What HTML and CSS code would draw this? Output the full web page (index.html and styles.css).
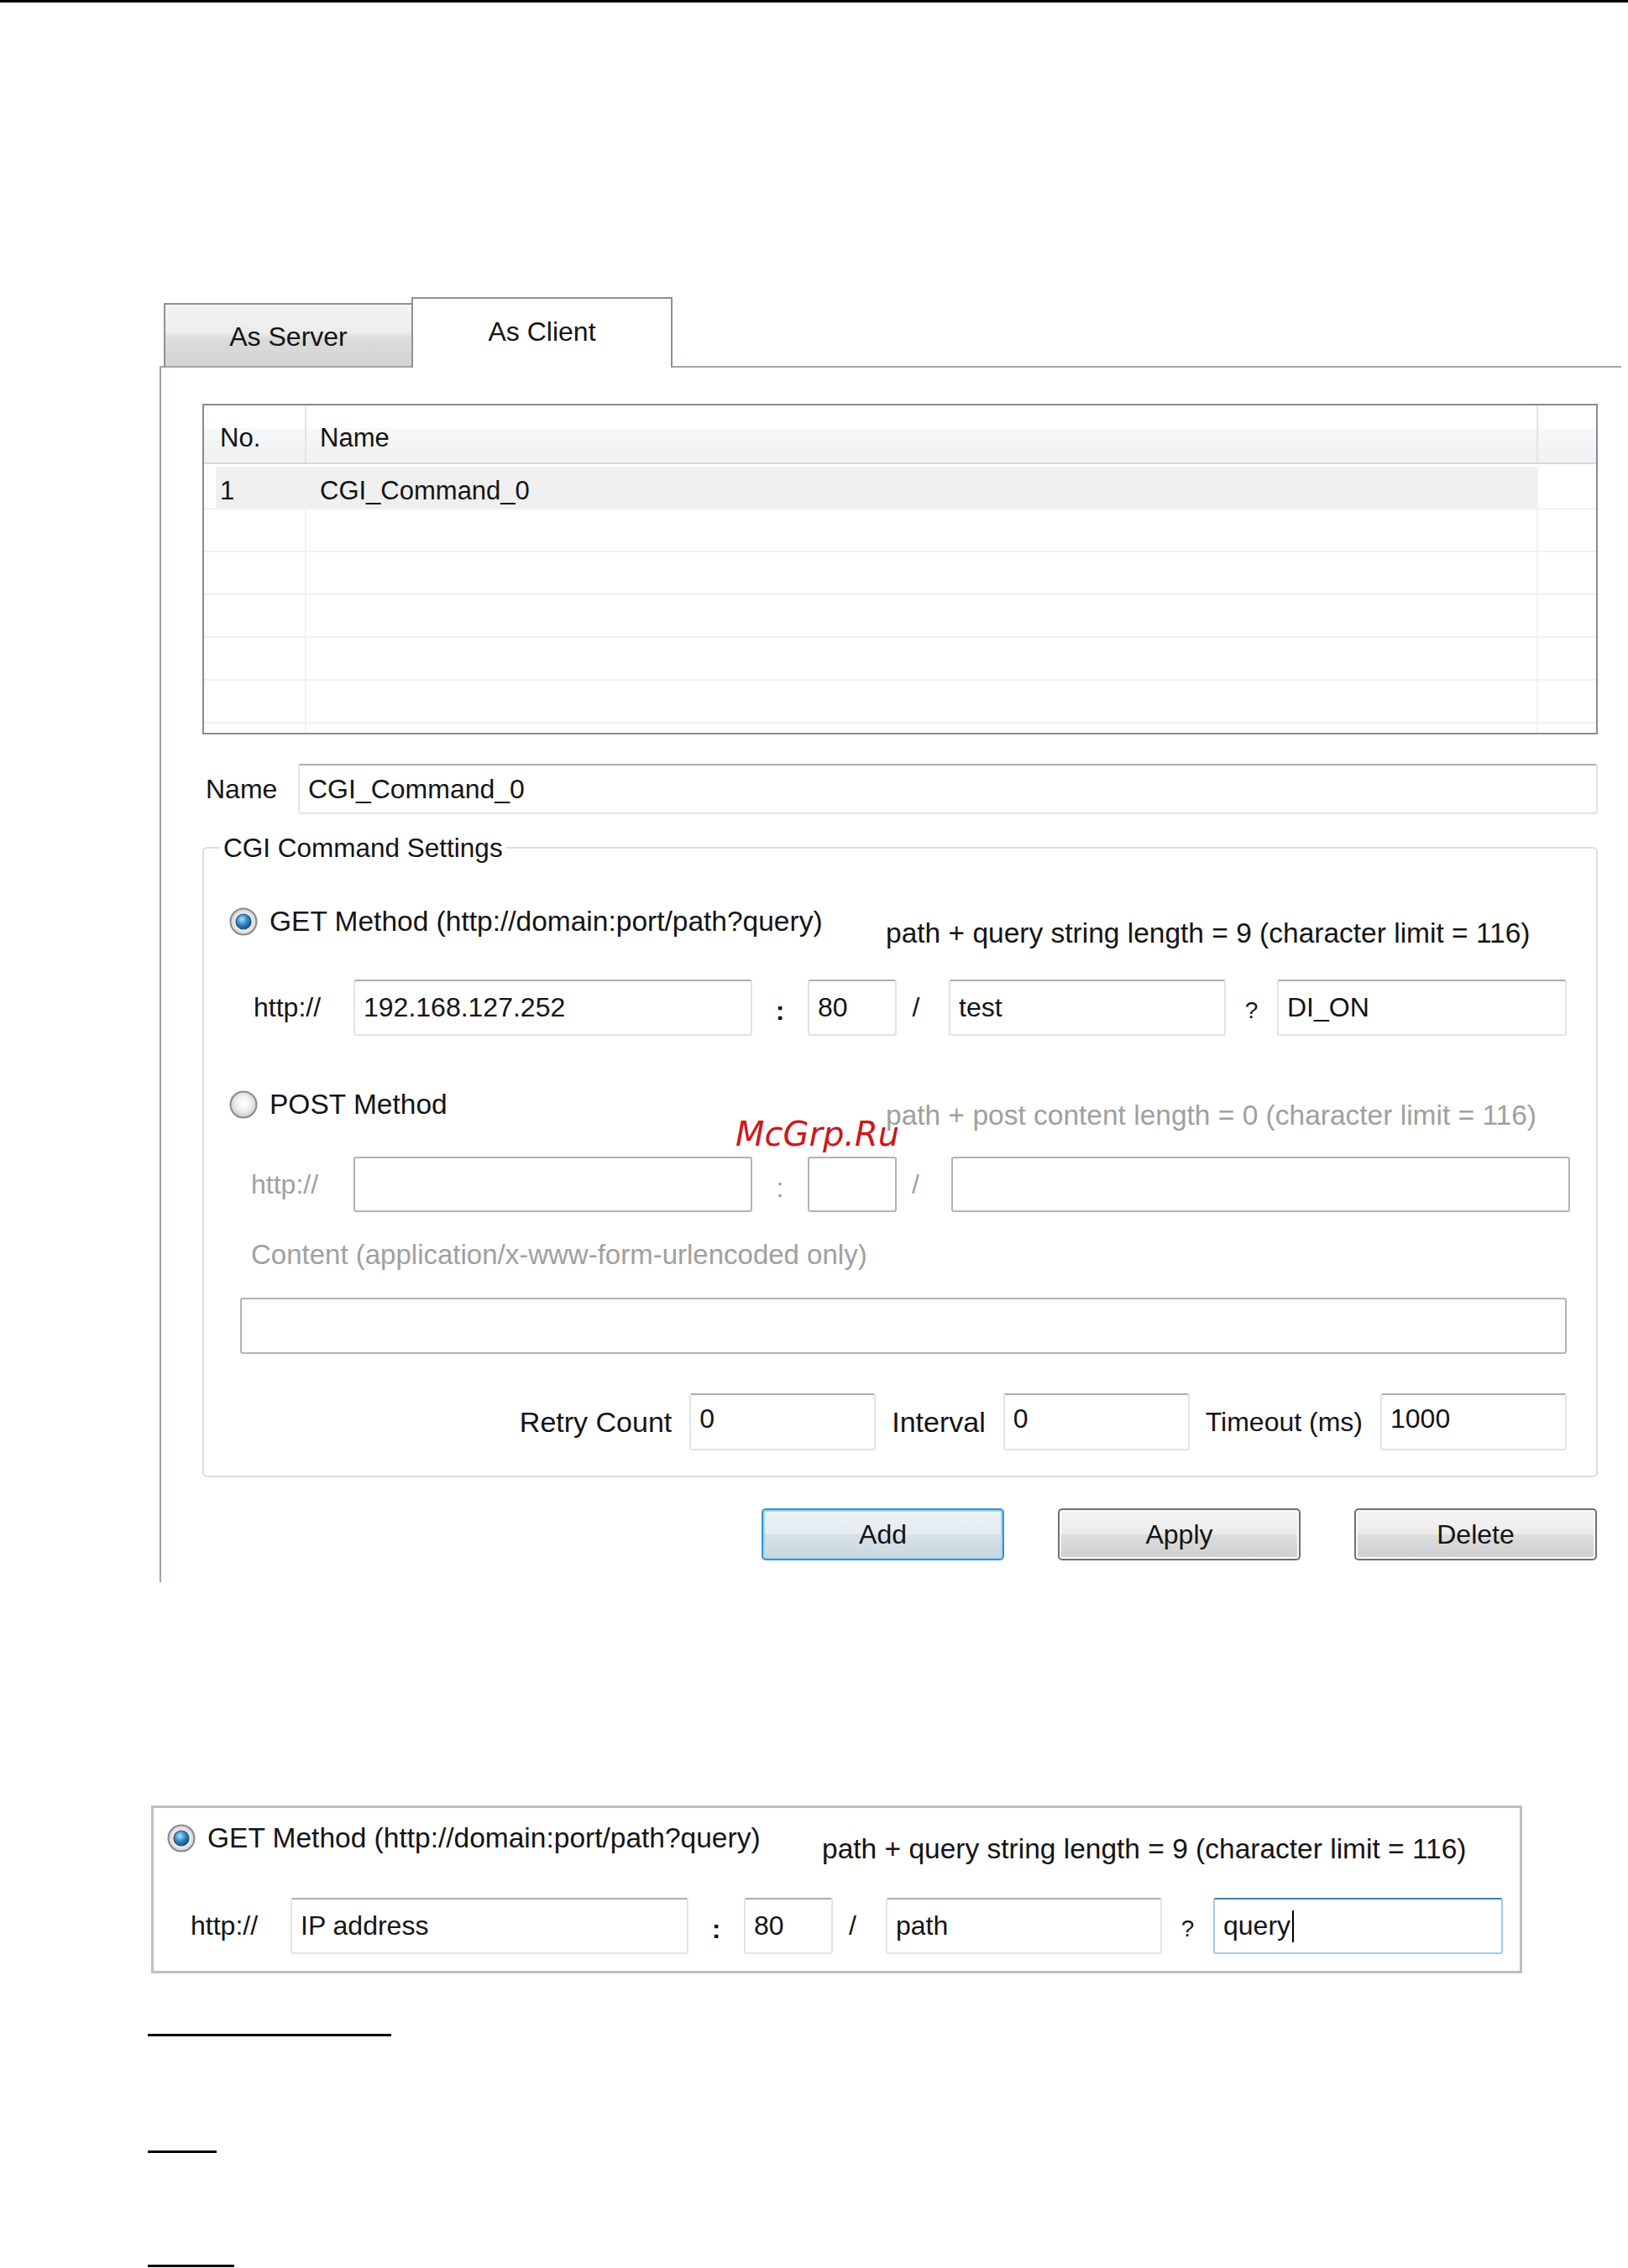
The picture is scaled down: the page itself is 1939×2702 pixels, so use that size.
FILE: index.html
```html
<!DOCTYPE html>
<html lang="en">
<head>
    <meta charset="UTF-8">
    <meta name="viewport" content="width=device-width, initial-scale=1.0">
    <title>CGI Command - As Client</title>
    <link rel="stylesheet" href="styles.css">
</head>
<body>
    <div class="page-rule"></div>

    <div class="tabs">
        <div class="tab-gap"></div>
        <div class="tab tab-server">As Server</div>
        <div class="tab tab-client">As Client</div>
        <div class="tab-fill"></div>
    </div>

    <div class="client-panel">
        <div class="list">
            <div class="list-head">
                <div class="cell cell-no">No.</div>
                <div class="cell cell-name">Name</div>
                <div class="cell cell-end"></div>
            </div>
            <div class="list-row is-selected">
                <div class="cell cell-no">1</div>
                <div class="cell cell-name">CGI_Command_0</div>
                <div class="cell cell-end"></div>
            </div>
            <div class="list-row"><div class="cell"></div><div class="cell"></div><div class="cell cell-end"></div></div>
            <div class="list-row"><div class="cell"></div><div class="cell"></div><div class="cell cell-end"></div></div>
            <div class="list-row"><div class="cell"></div><div class="cell"></div><div class="cell cell-end"></div></div>
            <div class="list-row"><div class="cell"></div><div class="cell"></div><div class="cell cell-end"></div></div>
            <div class="list-row"><div class="cell"></div><div class="cell"></div><div class="cell cell-end"></div></div>
            <div class="list-row"><div class="cell"></div><div class="cell"></div><div class="cell cell-end"></div></div>
        </div>

        <div class="name-row">
            <label class="name-label" for="cmdName">Name</label>
            <input class="field name-field" id="cmdName" type="text" value="CGI_Command_0">
        </div>

        <fieldset class="settings">
            <legend>CGI Command Settings</legend>
            <div class="settings-body">
                <div class="method">
                    <label class="option">
                        <svg class="radio" width="34" height="34" viewBox="0 0 34 34">
                            <defs>
                                <radialGradient id="ringOn" cx="50%" cy="50%" r="50%">
                                    <stop offset="0.5" stop-color="#fbfbfb"/>
                                    <stop offset="1" stop-color="#cfcfcf"/>
                                </radialGradient>
                                <radialGradient id="dotOn" cx="40%" cy="35%" r="70%">
                                    <stop offset="0" stop-color="#b0e4fc"/>
                                    <stop offset="0.45" stop-color="#3b93d1"/>
                                    <stop offset="1" stop-color="#15456e"/>
                                </radialGradient>
                            </defs>
                            <circle cx="17" cy="17" r="15.5" fill="url(#ringOn)" stroke="#8a8a8a" stroke-width="2"/>
                            <circle cx="17" cy="17" r="9" fill="url(#dotOn)" stroke="#1d4e78" stroke-width="1.2"/>
                        </svg>
                        <span>GET Method (http://domain:port/path?query)</span>
                    </label>
                    <span class="hint hint-get">path + query string length = 9 (character limit = 116)</span>
                </div>

                <div class="url-row url-get">
                    <span class="scheme">http://</span>
                    <input class="field host" type="text" value="192.168.127.252">
                    <span class="sep sep-colon">:</span>
                    <input class="field port" type="text" value="80">
                    <span class="sep sep-slash">/</span>
                    <input class="field path" type="text" value="test">
                    <span class="sep sep-query">?</span>
                    <input class="field query" type="text" value="DI_ON">
                </div>

                <div class="method method-post">
                    <label class="option">
                        <svg class="radio" width="34" height="34" viewBox="0 0 34 34">
                            <defs>
                                <radialGradient id="ringOff" cx="50%" cy="45%" r="55%">
                                    <stop offset="0" stop-color="#ffffff"/>
                                    <stop offset="0.55" stop-color="#eeeeee"/>
                                    <stop offset="1" stop-color="#c4c4c4"/>
                                </radialGradient>
                            </defs>
                            <circle cx="17" cy="17" r="15.5" fill="url(#ringOff)" stroke="#8a8a8a" stroke-width="2"/>
                        </svg>
                        <span>POST Method</span>
                    </label>
                    <span class="hint hint-post">path + post content length = 0 (character limit = 116)</span>
                </div>

                <div class="url-row url-post">
                    <span class="scheme">http://</span>
                    <input class="field host" type="text" disabled>
                    <span class="sep sep-colon">:</span>
                    <input class="field port" type="text" disabled>
                    <span class="sep sep-slash-wide">/</span>
                    <input class="field post-path" type="text" disabled>
                </div>

                <div class="content-label">Content (application/x-www-form-urlencoded only)</div>
                <input class="field content-field" type="text" disabled>

                <div class="timing">
                    <label class="timing-label">Retry Count</label>
                    <input class="field num" type="text" value="0">
                    <label class="timing-label">Interval</label>
                    <input class="field num" type="text" value="0">
                    <label class="timing-label timing-ms">Timeout (ms)</label>
                    <input class="field num" type="text" value="1000">
                </div>
            </div>
        </fieldset>

        <div class="actions">
            <button class="btn btn-default">Add</button>
            <button class="btn">Apply</button>
            <button class="btn">Delete</button>
        </div>
    </div>

    <div class="figure">
        <div class="method">
            <label class="option">
                <svg class="radio" width="34" height="34" viewBox="0 0 34 34">
                    <defs>
                        <radialGradient id="ringFig" cx="50%" cy="50%" r="50%">
                            <stop offset="0.5" stop-color="#fbfbfb"/>
                            <stop offset="1" stop-color="#cfcfcf"/>
                        </radialGradient>
                        <radialGradient id="dotFig" cx="40%" cy="35%" r="70%">
                            <stop offset="0" stop-color="#b0e4fc"/>
                            <stop offset="0.45" stop-color="#3b93d1"/>
                            <stop offset="1" stop-color="#15456e"/>
                        </radialGradient>
                    </defs>
                    <circle cx="17" cy="17" r="15.5" fill="url(#ringFig)" stroke="#8a8a8a" stroke-width="2"/>
                    <circle cx="17" cy="17" r="9" fill="url(#dotFig)" stroke="#1d4e78" stroke-width="1.2"/>
                </svg>
                <span>GET Method (http://domain:port/path?query)</span>
            </label>
            <span class="hint hint-fig">path + query string length = 9 (character limit = 116)</span>
        </div>
        <div class="url-row url-fig">
            <span class="scheme">http://</span>
            <input class="field host" type="text" value="IP address">
            <span class="sep sep-colon">:</span>
            <input class="field port" type="text" value="80">
            <span class="sep sep-slash">/</span>
            <input class="field path" type="text" value="path">
            <span class="sep sep-query">?</span>
            <div class="field query field-focus">query<span class="caret"></span></div>
        </div>
    </div>

    <div class="rule rule-a"></div>
    <div class="rule rule-b"></div>
    <div class="rule rule-c"></div>

    <div class="watermark">McGrp.Ru</div>
</body>
</html>
```

FILE: styles.css
```css
body {
    margin: 0;
    background-color: #fff;
    font-family: "Liberation Sans", Arial, sans-serif;
    font-size: 32px;
    color: #141414;
    position: relative;
}
.page-rule {
    height: 3px;
    background-color: #000;
}

/* tabs */
.tabs {
    display: flex;
    align-items: flex-end;
    width: 1741px;
    height: 84px;
    margin: 351px 0 0 190px;
}
.tab-gap {
    width: 5px;
    border-bottom: 2px solid #a2a5ac;
}
.tab-fill {
    flex: 1;
    border-bottom: 2px solid #a2a5ac;
}
.tab {
    box-sizing: border-box;
    display: flex;
    align-items: center;
    justify-content: center;
    border: 2px solid #8c9097;
}
.tab-server {
    width: 295px;
    height: 77px;
    padding-top: 4px;
    border-right: none;
    border-bottom-color: #a2a5ac;
    background: linear-gradient(#f4f4f4 0%, #ececec 45%, #dcdcdc 55%, #d3d3d3 100%);
}
.tab-client {
    width: 311px;
    height: 84px;
    padding-bottom: 4px;
    border-bottom: none;
    background-color: #fff;
}

/* panel */
.client-panel {
    box-sizing: border-box;
    width: 1741px;
    margin-left: 190px;
    border-left: 2px solid #9da1a8;
    padding: 43px 28px 26px 49px;
}

/* list view */
.list {
    box-sizing: border-box;
    height: 394px;
    border: 2px solid #868a92;
    overflow: hidden;
    font-size: 31px;
}
.list-head,
.list-row {
    display: grid;
    grid-template-columns: 122px 1fr 69px;
    box-sizing: border-box;
}
.list-head {
    height: 70px;
    border-bottom: 2px solid #d6d7d9;
    background: linear-gradient(#fff 0%, #fff 40%, #f7f8f9 42%, #eef0f2 100%);
}
.list-head .cell {
    display: flex;
    align-items: center;
    padding-top: 10px;
    border-right: 2px solid #e3e4e6;
}
.list-row {
    height: 51px;
    border-bottom: 2px solid #f1f1f1;
}
.list-row.is-selected {
    height: 54px;
    padding-top: 3px;
}
.list-row .cell {
    display: flex;
    align-items: center;
    padding-top: 4px;
    border-right: 2px solid #f2f2f2;
}
.list-row.is-selected .cell {
    padding-top: 9px;
}
.list .cell-end {
    border-right: none;
}
.cell-no {
    padding-left: 19px;
}
.cell-name {
    padding-left: 16px;
}
.list-row.is-selected .cell-name {
    background-color: #efefef;
}
.list-row.is-selected .cell-no {
    background: linear-gradient(to right, #fff 14px, #efefef 14px);
}

/* text boxes */
.field {
    box-sizing: border-box;
    flex: none;
    height: 67px;
    margin: 0;
    padding: 0 10px;
    font: inherit;
    color: #141414;
    background-color: #fff;
    border: 2px solid #e0e3e9;
    border-top-color: #abadb3;
    border-radius: 3px;
    outline: none;
}
.field:disabled {
    background-color: #fff;
    border-color: #b3b3b3;
}

.name-row {
    display: flex;
    align-items: center;
    height: 60px;
    margin-top: 35px;
}
.name-label {
    box-sizing: border-box;
    width: 114px;
    padding-left: 4px;
}
.name-field {
    flex: 1;
    height: 60px;
}

/* settings group */
.settings {
    margin: 22px 0 0;
    padding: 0;
    min-width: 0;
    border: 2px solid #d5dfe5;
    border-radius: 6px;
}
.settings legend {
    margin-left: 19px;
    padding: 0 4px;
    line-height: 36px;
    font-size: 31.5px;
}
.settings-body {
    padding: 50px 0 30px 0;
}
.method {
    display: flex;
    align-items: center;
    height: 40px;
    padding-left: 30px;
}
.option {
    display: flex;
    align-items: center;
    gap: 14px;
    width: 782px;
    font-size: 33.5px;
}
.radio {
    flex: none;
}
.hint {
    font-size: 33.5px;
}
.hint-get {
    margin-top: 28px;
}
.method-post {
    margin-top: 62px;
}
.hint-post {
    margin-top: 26px;
    color: #a0a0a0;
}

.url-row {
    display: flex;
    align-items: center;
    height: 67px;
}
.url-get {
    margin-top: 49px;
    padding-left: 59px;
}
.url-post {
    margin-top: 42px;
    padding-left: 56px;
    height: 66px;
    color: #a0a0a0;
}
.url-post .field {
    height: 66px;
}
.scheme {
    width: 119px;
}
.url-post .scheme {
    width: 122px;
}
.sep {
    text-align: center;
}
.sep-colon {
    width: 66px;
    padding-top: 8px;
    font-weight: bold;
}
.url-post .sep-colon {
    font-weight: normal;
}
.sep-slash {
    box-sizing: border-box;
    width: 62px;
    padding-right: 16px;
}
.sep-slash-wide {
    box-sizing: border-box;
    width: 65px;
    padding-right: 20px;
}
.sep-query {
    width: 61px;
    padding-top: 6px;
    font-size: 28px;
}
.host {
    width: 475px;
}
.port {
    width: 106px;
}
.path {
    width: 330px;
}
.query {
    width: 345px;
}
.post-path {
    width: 737px;
}

.content-label {
    margin: 31px 0 0 56px;
    line-height: 40px;
    font-size: 33px;
    color: #a0a0a0;
}
.content-field {
    display: block;
    width: 1580px;
    margin: 31px 0 0 43px;
}

.timing {
    display: flex;
    justify-content: flex-end;
    align-items: center;
    height: 68px;
    margin-top: 47px;
    padding-right: 35px;
}
.timing-label {
    margin: 0 21px 0 19px;
    font-size: 34px;
}
.timing-label.timing-ms {
    font-size: 32px;
}
.num {
    width: 222px;
    height: 68px;
    padding-bottom: 8px;
}

/* buttons */
.actions {
    display: flex;
    justify-content: flex-end;
    gap: 64px;
    margin-top: 37px;
    padding-right: 1px;
}
.btn {
    box-sizing: border-box;
    width: 289px;
    height: 62px;
    padding: 0;
    font: inherit;
    color: #141414;
    border: 2px solid #707070;
    border-radius: 5px;
    box-shadow: inset 0 0 0 2px #fbfbfb;
    background: linear-gradient(#f3f3f3 0%, #ebebeb 50%, #dddddd 51%, #cfcfcf 100%);
}
.btn-default {
    border-color: #3c8fca;
    box-shadow: inset 0 0 0 2px #9fd6f5;
    background: linear-gradient(#eef3f7 0%, #e4ecf1 50%, #d6e1e9 51%, #cad7e0 100%);
}

/* second figure */
.figure {
    box-sizing: border-box;
    width: 1633px;
    margin: 266px 0 0 180px;
    border: 3px solid #bfbfbf;
    padding: 16px 0 20px 0;
}
.figure .method {
    padding-left: 16px;
}
.figure .option {
    width: 780px;
}
.hint-fig {
    margin-top: 26px;
}
.url-fig {
    margin-top: 51px;
    padding-left: 44px;
}
.url-fig .host {
    width: 474px;
}
.url-fig .sep-slash {
    width: 63px;
}
.url-fig .path {
    width: 329px;
}
.field-focus {
    display: flex;
    align-items: center;
    border-color: #a4c9ea;
    border-top-color: #3d7bad;
}
.caret {
    display: inline-block;
    width: 2px;
    height: 38px;
    margin-left: 2px;
    background-color: #000;
}

.rule {
    height: 3px;
    margin-left: 176px;
    background-color: #000;
}
.rule-a {
    width: 290px;
    margin-top: 72px;
}
.rule-b {
    width: 82px;
    margin-top: 136px;
}
.rule-c {
    width: 103px;
    margin-top: 133px;
}

.watermark {
    position: absolute;
    left: 876px;
    top: 1327px;
    font-family: "DejaVu Sans", sans-serif;
    font-style: italic;
    font-size: 40px;
    line-height: 48px;
    color: #d0161c;
}
```
